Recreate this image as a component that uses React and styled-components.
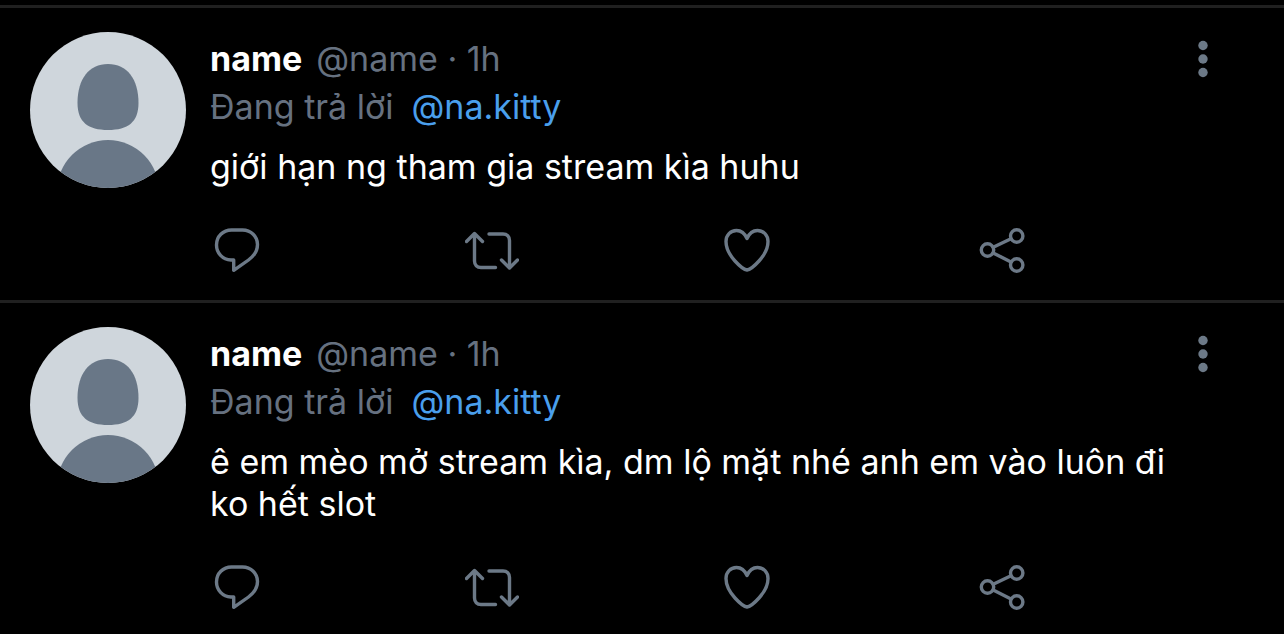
import React from 'react';
import styled, { createGlobalStyle } from 'styled-components';

const tweets = [
  {
    id: 1,
    name: 'name',
    handle: '@name',
    time: '1h',
    replyTo: '@na.kitty',
    text: 'giới hạn ng tham gia stream kìa huhu',
  },
  {
    id: 2,
    name: 'name',
    handle: '@name',
    time: '1h',
    replyTo: '@na.kitty',
    text: 'ê em mèo mở stream kìa, dm lộ mặt nhé anh em vào luôn đi ko hết slot',
  },
];

const actions = [
  { label: 'Trả lời', Icon: ReplyIcon },
  { label: 'Tweet lại', Icon: RetweetIcon },
  { label: 'Thích', Icon: HeartIcon },
  { label: 'Chia sẻ', Icon: ShareIcon },
];

export default function App() {
  return (
    <>
      <GlobalStyle />
      <Feed>
        {tweets.map((tweet) => (
          <Tweet key={tweet.id} tweet={tweet} />
        ))}
      </Feed>
    </>
  );
}

function Tweet({ tweet }) {
  return (
    <TweetWrapper>
      <Avatar />
      <Content>
        <TopLine>
          <Author>
            <Name>{tweet.name}</Name>
            <span>{tweet.handle} · {tweet.time}</span>
          </Author>
          <MenuButton type="button" aria-label="Thêm">
            <DotsIcon />
          </MenuButton>
        </TopLine>
        <ReplyLine>
          Đang trả lời
          <Mention href="#">{tweet.replyTo}</Mention>
        </ReplyLine>
        <Text>{tweet.text}</Text>
        <Actions>
          {actions.map(({ label, Icon }) => (
            <IconButton key={label} type="button" aria-label={label}>
              <Icon />
            </IconButton>
          ))}
        </Actions>
      </Content>
    </TweetWrapper>
  );
}

function Avatar() {
  return (
    <AvatarCircle>
      <svg viewBox="0 0 156 156" width="156" height="156" aria-hidden="true">
        <path
          d="M78 32C97 32 108.500 47 108.500 71C108.500 90 98 98 78 98C58 98 47.500 90 47.500 71C47.500 47 59 32 78 32Z"
          fill="#697787"
        />
        <circle cx="78" cy="159" r="51" fill="#697787" />
      </svg>
    </AvatarCircle>
  );
}

function ReplyIcon() {
  return (
    <Icon viewBox="0 0 54 54">
      <path d="M21.5 7H32.5C41 7 47.5 13.5 47.5 21.5C47.5 28 44 33 38.5 37L23.7 47.3V37H21C12.5 36.5 6.5 30 6.5 22C6.5 13.5 13 7 21.5 7Z" />
    </Icon>
  );
}

function RetweetIcon() {
  return (
    <Icon viewBox="0 0 54 54">
      <path d="M1.5 18.5L9.5 10.5L17.5 18.5M9.5 11V38C9.5 42 12 44.5 16 44.5H30.5" />
      <path d="M24 11H38C42 11 44.5 13.5 44.5 17.5V44.5M36.5 37L44.5 45L52.5 37" />
    </Icon>
  );
}

function HeartIcon() {
  return (
    <Icon viewBox="0 0 54 54">
      <path d="M27 47C23 46.5 6 33 6 18.5C6 12 10.5 7.5 16.5 7.5C21.5 7.5 25 11 27 15.5C29 11 32.5 7.5 37.5 7.5C43.5 7.5 48 12 48 18.5C48 33 31 46.5 27 47Z" />
    </Icon>
  );
}

function ShareIcon() {
  return (
    <Icon viewBox="0 0 54 54">
      <circle cx="12.5" cy="27" r="6.2" />
      <circle cx="41.7" cy="13" r="6.2" />
      <circle cx="41.7" cy="42" r="6.2" />
      <path d="M18.2 24.3L36 15.7M18.2 29.9L36 39" />
    </Icon>
  );
}

function DotsIcon() {
  return (
    <DotsSvg viewBox="0 0 54 48" aria-hidden="true">
      <circle cx="27" cy="10.5" r="4.7" />
      <circle cx="27" cy="24" r="4.7" />
      <circle cx="27" cy="37.5" r="4.7" />
    </DotsSvg>
  );
}

const GlobalStyle = createGlobalStyle`
  * {
    box-sizing: border-box;
  }

  body {
    margin: 0;
    background: #000000;
    font-family: 'Inter', 'Liberation Sans', sans-serif;
    font-size: 34px;
    color: #ffffff;
  }
`;

const Feed = styled.main`
  padding-top: 5px;
`;

const TweetWrapper = styled.article`
  display: flex;
  align-items: flex-start;
  gap: 24px;
  padding: 24px 54px 23px 30px;
  border-top: 3px solid #202020;
`;

const AvatarCircle = styled.div`
  flex: none;
  width: 156px;
  height: 156px;
  border-radius: 50%;
  background: #cfd6dc;
  overflow: hidden;

  svg {
    display: block;
  }
`;

const Content = styled.div`
  flex: 1;
  min-width: 0;
  padding-top: 3px;
`;

const TopLine = styled.div`
  display: flex;
  justify-content: space-between;
  line-height: 48px;
  color: #667180;
`;

const Author = styled.div`
  display: flex;
  gap: 14px;
  min-width: 0;
`;

const Name = styled.strong`
  font-weight: 700;
  color: #ffffff;
`;

const MenuButton = styled.button`
  width: 54px;
  height: 48px;
  padding: 0;
  border: none;
  background: none;
  color: #6c7987;
  cursor: pointer;
`;

const ReplyLine = styled.div`
  display: flex;
  gap: 18px;
  line-height: 48px;
  color: #667180;
`;

const Mention = styled.a`
  color: #4a9fec;
  text-decoration: none;
`;

const Text = styled.p`
  margin: 15px 0 35px;
  padding-right: 54px;
  line-height: 42px;
`;

const Actions = styled.div`
  display: grid;
  grid-template-columns: repeat(4, 1fr);
`;

const IconButton = styled.button`
  width: 54px;
  height: 54px;
  padding: 0;
  border: none;
  background: none;
  color: #6c7987;
  cursor: pointer;
`;

const Icon = styled.svg`
  display: block;
  width: 54px;
  height: 54px;
  fill: none;
  stroke: currentColor;
  stroke-width: 3.4px;
  stroke-linecap: round;
  stroke-linejoin: round;
`;

const DotsSvg = styled.svg`
  display: block;
  width: 54px;
  height: 48px;
  fill: currentColor;
`;
